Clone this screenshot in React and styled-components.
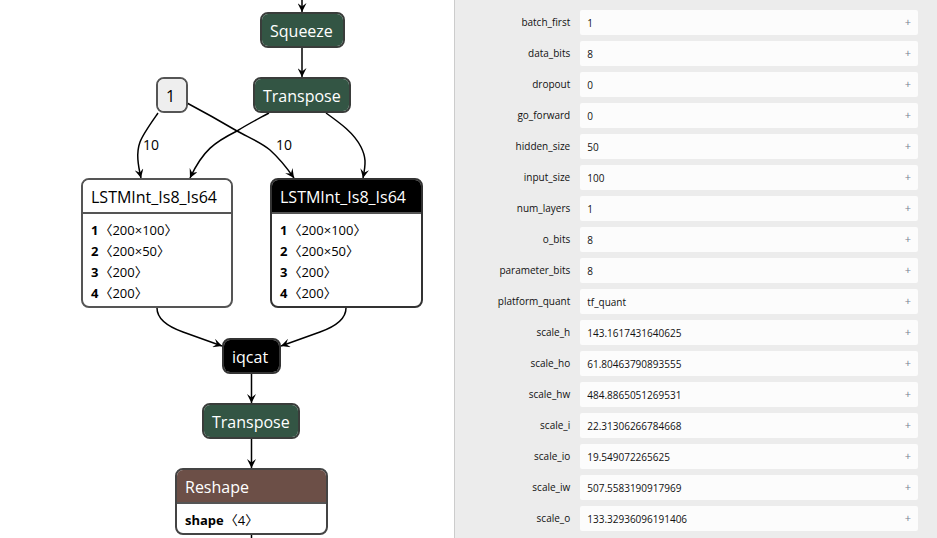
import React from "react";
import styled, { createGlobalStyle } from "styled-components";

const GlobalStyle = createGlobalStyle`
  * { box-sizing: border-box; }
  html, body, #root { height: 100%; }
  body {
    margin: 0;
    overflow: hidden;
    background: #fff;
    color: #000;
    font-family: "Open Sans", "Noto Sans", "Noto Sans CJK JP", sans-serif;
  }
`;

const Page = styled.div`
  display: grid;
  grid-template-columns: minmax(0, 16fr) minmax(0, 17fr);
  height: 100%;
`;

const Canvas = styled.main`
  position: relative;
  overflow: hidden;
  background: #fff;
`;

const Edges = styled.svg`
  position: absolute;
  inset: 0;
  width: 100%;
  height: 100%;
`;

const EdgeLabel = styled.span`
  position: absolute;
  left: ${(p) => p.$x}px;
  top: ${(p) => p.$y}px;
  font-size: 14px;
  line-height: 20px;
`;

const tones = {
  shape: { background: "#335544", color: "#fff", border: "#3a3d3b" },
  constant: { background: "#eeeeee", color: "#000", border: "#555" },
  custom: { background: "#000", color: "#fff", border: "#333" },
  plain: { background: "#fff", color: "#000", border: "#555" },
  reshape: { background: "#6c4f47", color: "#fff", border: "#444" },
};

const Node = styled.section`
  position: absolute;
  left: ${(p) => p.$x}px;
  top: ${(p) => p.$y}px;
  width: ${(p) => p.$w}px;
  overflow: hidden;
  border: 2px solid ${(p) => tones[p.$tone].border};
  border-radius: 8px;
  background: #fff;
`;

const NodeTitle = styled.h2`
  margin: 0;
  padding: 2px 8px 0;
  font-size: 16px;
  font-weight: 400;
  line-height: 30px;
  white-space: nowrap;
  background: ${(p) => tones[p.$tone].background};
  color: ${(p) => tones[p.$tone].color};
`;

const Tensors = styled.ul`
  margin: 0;
  padding: 6px 8px 2px;
  list-style: none;
  border-top: 2px solid #555;
  font-size: 13px;
  line-height: 21px;
  white-space: nowrap;
`;

const TensorName = styled.b`
  margin-right: 1px;
`;

const Sidebar = styled.aside`
  overflow: hidden;
  padding: 10px 19px 0 0;
  border-left: 1px solid #ccc;
  background: #ececec;
`;

const Attributes = styled.form`
  display: grid;
  gap: 6px;
`;

const Row = styled.div`
  display: grid;
  grid-template-columns: minmax(0, 1fr) minmax(0, 73%);
  column-gap: 10px;
`;

const Name = styled.label`
  font-size: 10px;
  line-height: 24px;
  text-align: right;
  white-space: nowrap;
  color: #111;
`;

const Field = styled.div`
  display: flex;
  height: 25px;
  border-radius: 2px;
  background: #fcfcfc;
`;

const Value = styled.input`
  flex: 1;
  min-width: 0;
  padding: 0 7px;
  border: 0;
  outline: 0;
  background: transparent;
  color: #111;
  font-family: inherit;
  font-size: 10px;
`;

const Expander = styled.button`
  width: 20px;
  padding: 0 0 2px;
  border: 0;
  background: transparent;
  color: #777c90;
  font-family: inherit;
  font-size: 11px;
  line-height: 20px;
  cursor: pointer;
`;

const lstmTensors = [
  ["1", "〈200×100〉"],
  ["2", "〈200×50〉"],
  ["3", "〈200〉"],
  ["4", "〈200〉"],
];

const nodes = [
  { title: "Squeeze", tone: "shape", x: 260, y: 12, w: 85 },
  { title: "1", tone: "constant", x: 156, y: 77, w: 32 },
  { title: "Transpose", tone: "shape", x: 253, y: 77, w: 98 },
  { title: "LSTMInt_Is8_Is64", tone: "plain", x: 81, y: 178, w: 152, tensors: lstmTensors },
  { title: "LSTMInt_Is8_Is64", tone: "custom", x: 270, y: 178, w: 153, tensors: lstmTensors },
  { title: "iqcat", tone: "custom", x: 222, y: 338, w: 59 },
  { title: "Transpose", tone: "shape", x: 202, y: 403, w: 98 },
  { title: "Reshape", tone: "reshape", x: 175, y: 468, w: 153, tensors: [["shape", "〈4〉"]] },
];

const edges = [
  "M302 -10 V12",
  "M302 47 V77",
  "M158 113 C151 123 143 134 140 142 C136 153 138 165 141 178",
  "M187 103 C204 112 220 121 237 131 C250 138 262 143 270 150 C280 159 287 168 294 178",
  "M269 113 C258 119 248 124 237 131 C215 142 203 150 190 178",
  "M326 113 C340 123 354 133 361 147 C366 157 366 163 363 178",
  "M157 308 C157 320 169 327 183 332 L222 346",
  "M346 308 C346 320 334 327 320 332 L281 346",
  "M251.5 373 V403",
  "M251.5 438 V468",
  "M251.5 533 V560",
];

const attributes = [
  ["batch_first", "1"],
  ["data_bits", "8"],
  ["dropout", "0"],
  ["go_forward", "0"],
  ["hidden_size", "50"],
  ["input_size", "100"],
  ["num_layers", "1"],
  ["o_bits", "8"],
  ["parameter_bits", "8"],
  ["platform_quant", "tf_quant"],
  ["scale_h", "143.1617431640625"],
  ["scale_ho", "61.80463790893555"],
  ["scale_hw", "484.8865051269531"],
  ["scale_i", "22.31306266784668"],
  ["scale_io", "19.549072265625"],
  ["scale_iw", "507.5583190917969"],
  ["scale_o", "133.32936096191406"],
];

function GraphNode({ title, tone, x, y, w, tensors }) {
  return (
    <Node $tone={tone} $x={x} $y={y} $w={w}>
      <NodeTitle $tone={tone}>{title}</NodeTitle>
      {tensors && (
        <Tensors>
          {tensors.map(([name, shape]) => (
            <li key={name}>
              <TensorName>{name}</TensorName>
              {shape}
            </li>
          ))}
        </Tensors>
      )}
    </Node>
  );
}

export default function App() {
  return (
    <>
      <GlobalStyle />
      <Page>
        <Canvas>
          <Edges aria-hidden="true">
            <defs>
              <marker
                id="arrow"
                viewBox="0 0 10 10"
                refX="10"
                refY="5"
                markerWidth="9"
                markerHeight="9"
                markerUnits="userSpaceOnUse"
                orient="auto"
              >
                <path d="M0 0 L10 5 L0 10 L4 5 Z" />
              </marker>
            </defs>
            <g fill="none" stroke="#000" strokeWidth="1.5">
              {edges.map((d) => (
                <path key={d} d={d} markerEnd="url(#arrow)" />
              ))}
            </g>
          </Edges>
          {nodes.map((node) => (
            <GraphNode key={`${node.x}-${node.y}`} {...node} />
          ))}
          <EdgeLabel $x={143} $y={135}>10</EdgeLabel>
          <EdgeLabel $x={276} $y={135}>10</EdgeLabel>
        </Canvas>
        <Sidebar>
          <Attributes>
            {attributes.map(([name, value]) => (
              <Row key={name}>
                <Name htmlFor={name}>{name}</Name>
                <Field>
                  <Value id={name} defaultValue={value} readOnly />
                  <Expander type="button" aria-label={`Expand ${name}`}>+</Expander>
                </Field>
              </Row>
            ))}
          </Attributes>
        </Sidebar>
      </Page>
    </>
  );
}
